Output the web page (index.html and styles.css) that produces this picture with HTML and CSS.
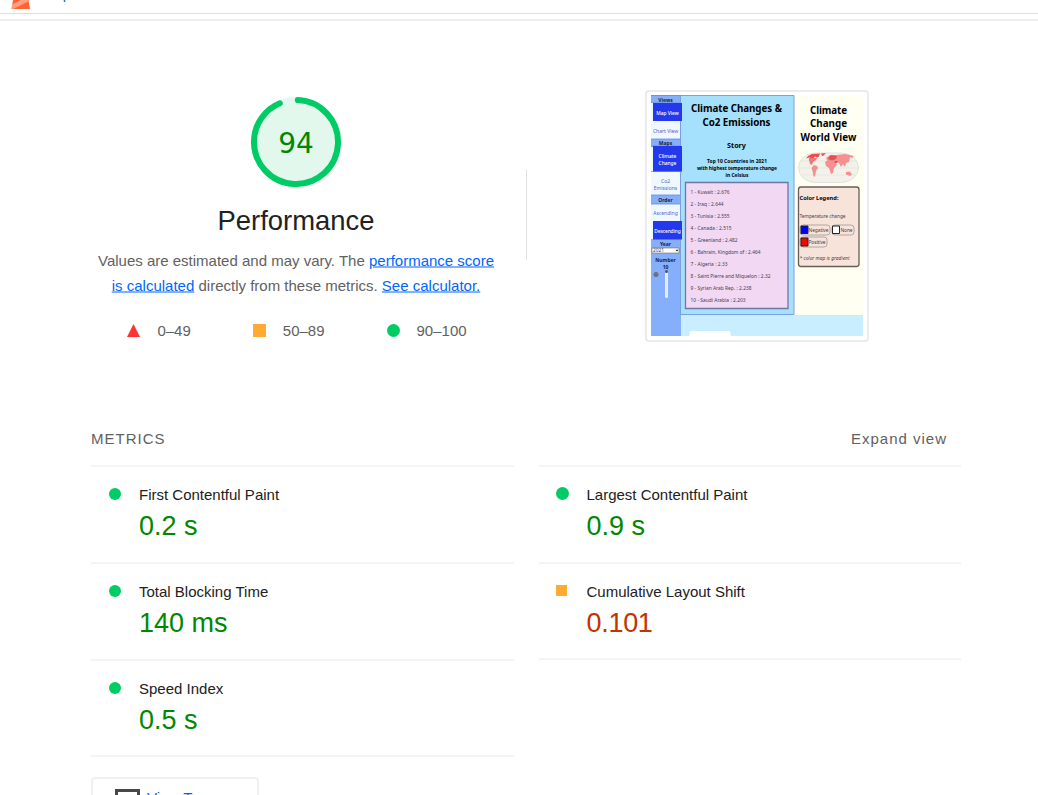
FILE: index.html
```html
<!DOCTYPE html>
<html lang="en">
<head>
<meta charset="utf-8">
<title>Performance report</title>
<link rel="stylesheet" href="styles.css">
</head>
<body>
<header class="topbar">
  <svg class="logo" width="20" height="9" viewBox="0 0 20 9"><path fill="#ff6333" d="M2 0h15.500L19 9H.5z"/><path fill="#ff9e80" d="M1 4.500 10 0h7.500v1.500L2 9H.5z"/></svg>
  <span class="url">http</span>
</header>
<div class="divider"></div>
<main class="report">
  <section class="summary">
    <div class="score">
      <svg class="gauge" width="90" height="90" viewBox="0 0 90 90">
        <circle cx="45" cy="45" r="45" fill="#e3f8ed"/>
        <circle cx="45" cy="45" r="42" fill="none" stroke="#00cc66" stroke-width="6" stroke-linecap="round" stroke-dasharray="245 264" transform="rotate(-87.500 45 45)"/>
        <text class="gauge-value" x="45" y="56" text-anchor="middle">94</text>
      </svg>
      <h1 class="heading">Performance</h1>
      <p class="description">Values are estimated and may vary. The <a>performance score</a><br><a>is calculated</a> directly from these metrics. <a>See calculator.</a></p>
      <div class="legend">
        <span class="range"><svg width="13" height="13"><path fill="#f33" d="M6.500 0 13 13H0z"/></svg>0–49</span>
        <span class="range"><i class="square"></i>50–89</span>
        <span class="range"><i class="circle"></i>90–100</span>
      </div>
    </div>
    <div class="separator"></div>
    <div class="preview">
      <svg class="shot" width="212" height="241" viewBox="651 95 212 241">
        <path fill="#c8eeff" d="M651 95h212v241H651z"/>
        <path fill="#fffff2" d="M794 95h69v220h-69z"/>
        <path fill="#86affb" d="M651 95h30v241h-30z"/>
        <path fill="#a5e0fd" stroke="#7b9fe3" d="M680.500 95.500h113.500v219H680.500z"/>
        <path fill="#f0f8ff" d="M651 121h29v18h-29zM651 172h29v23h-29zM651 204h29v17h-29z"/>
        <path stroke="#648be0" stroke-width=".8" d="M651 95.500h30M651 103h29M651 139h29M651 146h29M651 195h29M651 204h29"/>
        <path fill="#f0f8ff" d="M651 103h2v18h-2zM651 147h2v24h-2zM651 221h2v18h-2z"/>
        <path fill="#2438ee" d="M653 103h29v18h-29zM653 146h29v25.500h-29zM653 221h29v18.500h-29z"/>
        <g class="side-head"><text x="665.500" y="101.500">Views</text><text x="665.500" y="145">Maps</text><text x="665.500" y="202">Order</text><text x="665.500" y="245.500">Year</text><text x="665.500" y="262">Number</text><text x="665.500" y="269">10</text></g>
        <g class="side-on"><text x="667.500" y="114.500">Map View</text><text x="667.500" y="157.500">Climate</text><text x="667.500" y="164.500">Change</text><text x="667.500" y="233" textLength="26.500">Descending</text></g>
        <g class="side-off"><text x="665.500" y="132.500">Chart View</text><text x="665.500" y="182.500">Co2</text><text x="665.500" y="189.500">Emissions</text><text x="665.500" y="214.500">Ascending</text></g>
        <path fill="#fff" stroke="#555" stroke-width=".5" d="M652 248h27v5h-27z"/>
        <text class="tiny" x="653" y="252.300">2021</text><path fill="#222" d="m675.500 249.800 3 0-1.500 1.700z"/>
        <rect x="665" y="271" width="3" height="27" rx="1.500" fill="#e6eafa"/><circle cx="656" cy="274.500" r="2.500" fill="#6b7280"/><circle cx="666.500" cy="271.500" r="1.500" fill="#555"/>
        <g class="title"><text x="736.500" y="112" textLength="91">Climate Changes &amp;</text><text x="736.500" y="125.500" textLength="68">Co2 Emissions</text><text x="828.500" y="113.500" textLength="37">Climate</text><text x="828.500" y="127" textLength="37">Change</text><text x="828.500" y="140.500" textLength="56">World View</text></g>
        <text class="story" x="736.500" y="148">Story</text>
        <g class="sub"><text x="737" y="162.500" textLength="60">Top 10 Countries in 2021</text><text x="737" y="169.500" textLength="80">with highest temperature change</text><text x="737" y="176.500" textLength="23">in Celsius</text></g>
        <path fill="#f2d8f2" stroke="#70779f" stroke-width="1.300" d="M685.500 182.500h102.500v126H685.500z"/>
        <g class="tiny"><text x="690.500" y="194" textLength="39">1 - Kuwait : 2.676</text><text x="690.500" y="206" textLength="33">2 - Iraq : 2.644</text><text x="690.500" y="218" textLength="39">3 - Tunisia : 2.555</text><text x="690.500" y="230" textLength="41">4 - Canada : 2.515</text><text x="690.500" y="242" textLength="47">5 - Greenland : 2.482</text><text x="690.500" y="254" textLength="70">6 - Bahrain, Kingdom of : 2.464</text><text x="690.500" y="266" textLength="37">7 - Algeria : 2.33</text><text x="690.500" y="278" textLength="80">8 - Saint Pierre and Miquelon : 2.32</text><text x="690.500" y="290" textLength="61">9 - Syrian Arab Rep. : 2.238</text><text x="690.500" y="302" textLength="55">10 - Saudi Arabia : 2.203</text></g>
        <rect x="798.500" y="153" width="60" height="29.500" rx="18" ry="14.500" fill="#f2f2ea" stroke="#d8d8d4" stroke-width=".7"/>
        <path stroke="#dedeD8" stroke-width=".5" d="M800 161h57M799 168h59M802 175h53"/>
        <path fill="#f04a50" d="m808 156 4-2 8-.5-1 3-2 1-2-1-2 2-4-1-3 1z"/>
        <path fill="#f5777b" d="m809 158 8 0-1 2-3 2-1 3-2-1-1-4z"/>
        <path fill="#ed4f55" d="M821 153.500l5-.5-3 3-1 0z"/>
        <path fill="#f58f90" d="m814 165 3 1 1 2-2 3-1 6-1.500-1-1-5-1-3zM825 162l3-2 6 1 3 4-3 3-1 5-2 1-2-6-3-2zM826 158l4-3 7 0 8-1 9 2-2 2-2-1-1 5-3 1-1 4-2-3-2 3-2-4-4-2-5 1-3-2zM846 172l4-.5 2 3-2 1.500-4-1.500z"/>
        <path fill="#e55055" d="m828 158 3-3 6 1-1 3-4 1.500-3-1zM834 161l4 0-1 2-2 0z"/>
        <rect x="798.500" y="187" width="60.500" height="79.500" rx="2.500" fill="#f8e3da" stroke="#685d59" stroke-width="1.300"/>
        <text class="legend-head" x="799.500" y="199.500" textLength="39">Color Legend:</text>
        <text class="tiny" x="799.500" y="218" textLength="46">Temperature change</text>
        <g fill="none" stroke="#999" stroke-width=".8"><rect x="800" y="225" width="30" height="10" rx="3"/><rect x="832" y="225" width="22" height="10" rx="3"/><rect x="800" y="237" width="27" height="10" rx="3"/></g>
        <g stroke="#222" stroke-width="1"><path fill="#00f" d="M801 226h7v7.500h-7z"/><path fill="#fff" d="M832.500 226h7v7.500h-7z"/><path fill="red" d="M801 238h7v8h-7z"/></g>
        <g class="tiny"><text x="808.500" y="232" textLength="20">Negative</text><text x="840.500" y="232" textLength="12">None</text><text x="808.500" y="244" textLength="17">Positive</text><text class="italic" x="799.500" y="260" textLength="50">* color map is gradient</text></g>
        <path fill="#fff" d="M689.500 336v-3q0-2 2-2h37q2 0 2 2v3z"/>
      </svg>
    </div>
  </section>
  <div class="metrics-bar"><span class="metrics-title">METRICS</span><span class="expand">Expand view</span></div>
  <section class="metrics">
    <div class="column">
      <article class="metric"><i class="circle"></i><div><h2 class="name">First Contentful Paint</h2><p class="value">0.2 s</p></div></article>
      <article class="metric"><i class="circle"></i><div><h2 class="name">Total Blocking Time</h2><p class="value">140 ms</p></div></article>
      <article class="metric last"><i class="circle"></i><div><h2 class="name">Speed Index</h2><p class="value">0.5 s</p></div></article>
    </div>
    <div class="column right">
      <article class="metric"><i class="circle"></i><div><h2 class="name">Largest Contentful Paint</h2><p class="value">0.9 s</p></div></article>
      <article class="metric last"><i class="square"></i><div><h2 class="name">Cumulative Layout Shift</h2><p class="value poor">0.101</p></div></article>
    </div>
  </section>
  <button class="treemap"><svg width="25" height="22" viewBox="0 0 25 22"><path fill="none" stroke="#484848" stroke-width="3" d="M1.500 1.500h22v16h-22z"/></svg>View Treemap</button>
</main>
</body>
</html>
```
FILE: styles.css
```css
* { box-sizing: border-box; }
body { margin: 0; height: 795px; overflow: hidden; background: #fff; color: #212121; font: 15px/25px "Liberation Sans", Arial, sans-serif; }
h1, h2, p { margin: 0; font-weight: 400; }
.topbar { height: 14px; padding-left: 11px; display: flex; border-bottom: 1px solid #dedede; overflow: hidden; }
.logo { flex: none; }
.url { margin: -15px 0 0 15px; line-height: 18px; height: 18px; color: #1a66b8; }
.divider { height: 2px; margin-top: 5px; background: #eee; }
.report { width: 870px; margin: 0 0 0 91px; }
.summary { display: flex; height: 395px; padding-top: 69px; }
.score { width: 410px; padding-top: 7px; display: flex; flex-direction: column; align-items: center; }
.gauge { flex: none; display: block; }
.gauge-value { font: 28px "DejaVu Sans", sans-serif; fill: #080; }
.heading { font-size: 27.400px; line-height: 36px; margin-top: 16px; }
.description { margin-top: 9px; white-space: nowrap; color: #616161; text-align: center; }
.description a { color: #06f; text-decoration: underline; text-decoration-color: #80b0ff; text-decoration-thickness: 2px; text-underline-offset: 0; }
.legend { display: flex; gap: 62px; margin-top: 19.500px; color: #616161; transform: translateX(1px); }
.range { display: flex; align-items: center; gap: 17px; }
.circle, .square { display: block; flex: none; width: 13px; height: 13px; background: #0c6; }
.circle { border-radius: 50%; }
.square { background: #fa3; }
.separator { flex: none; width: 1px; height: 90px; margin: 80px 0 0 25px; background: #e0e0e0; }
.preview { flex: none; width: 224px; height: 252px; margin: -0.500px 0 0 118px; padding: 4px; border: 2px solid #ebebeb; border-radius: 4px; }
.shot { display: block; margin-top: -1px; }
.shot text { font-family: "Noto Sans", sans-serif; }
.shot .title, .shot .story, .shot .sub, .side-head, .side-on, .side-off { text-anchor: middle; }
.shot .title { font-size: 9.800px; font-weight: 700; }
.shot .story { font-size: 7.200px; font-weight: 700; }
.shot .sub { font-size: 4.900px; font-weight: 700; }
.tiny { font-size: 4.800px; fill: #443d4c; }
.italic { font-style: italic; }
.legend-head { font-size: 5.700px; font-weight: 700; }
.side-head { font-size: 5px; font-weight: 700; fill: #17233f; }
.side-on { font-size: 4.900px; font-weight: 500; fill: #fff; }
.side-off { font-size: 5px; fill: #5463ce; }
.metrics-bar { display: flex; justify-content: space-between; height: 49px; padding: 10px 14px 0 0; color: #616161; }
.metrics-title { letter-spacing: 1px; }
.expand { letter-spacing: 1px; }
.metrics { display: grid; grid-template-columns: 423px 422px; gap: 25px; }
.metric { display: flex; gap: 18px; height: 97px; padding: 15px 0 0 18px; border-top: 2px solid #f4f4f4; }
.metric .circle { width: 12px; height: 12px; margin-top: 5.500px; }
.metric .square { width: 11px; height: 11px; margin: 6px 1.500px 0 0; }
.right .metric { padding-left: 17px; }
.right .circle { width: 13px; height: 13px; margin: 5px -0.500px 0 0; }
.metric.last { border-bottom: 2px solid #f4f4f4; height: 98px; }
.name { font-size: 15px; line-height: 25px; }
.value { margin-top: 1px; font-size: 27px; line-height: 36px; color: #080; }
.value.poor { color: #c33300; letter-spacing: -.3px; }
.treemap { display: flex; align-items: flex-start; gap: 7px; width: 168px; height: 44px; margin-top: 20px; padding: 10px 0 0 22px; background: #fff; border: 2px solid #f0f0f0; border-radius: 4px; color: #06f; font: 15px/18px "Liberation Sans", Arial, sans-serif; }
```
